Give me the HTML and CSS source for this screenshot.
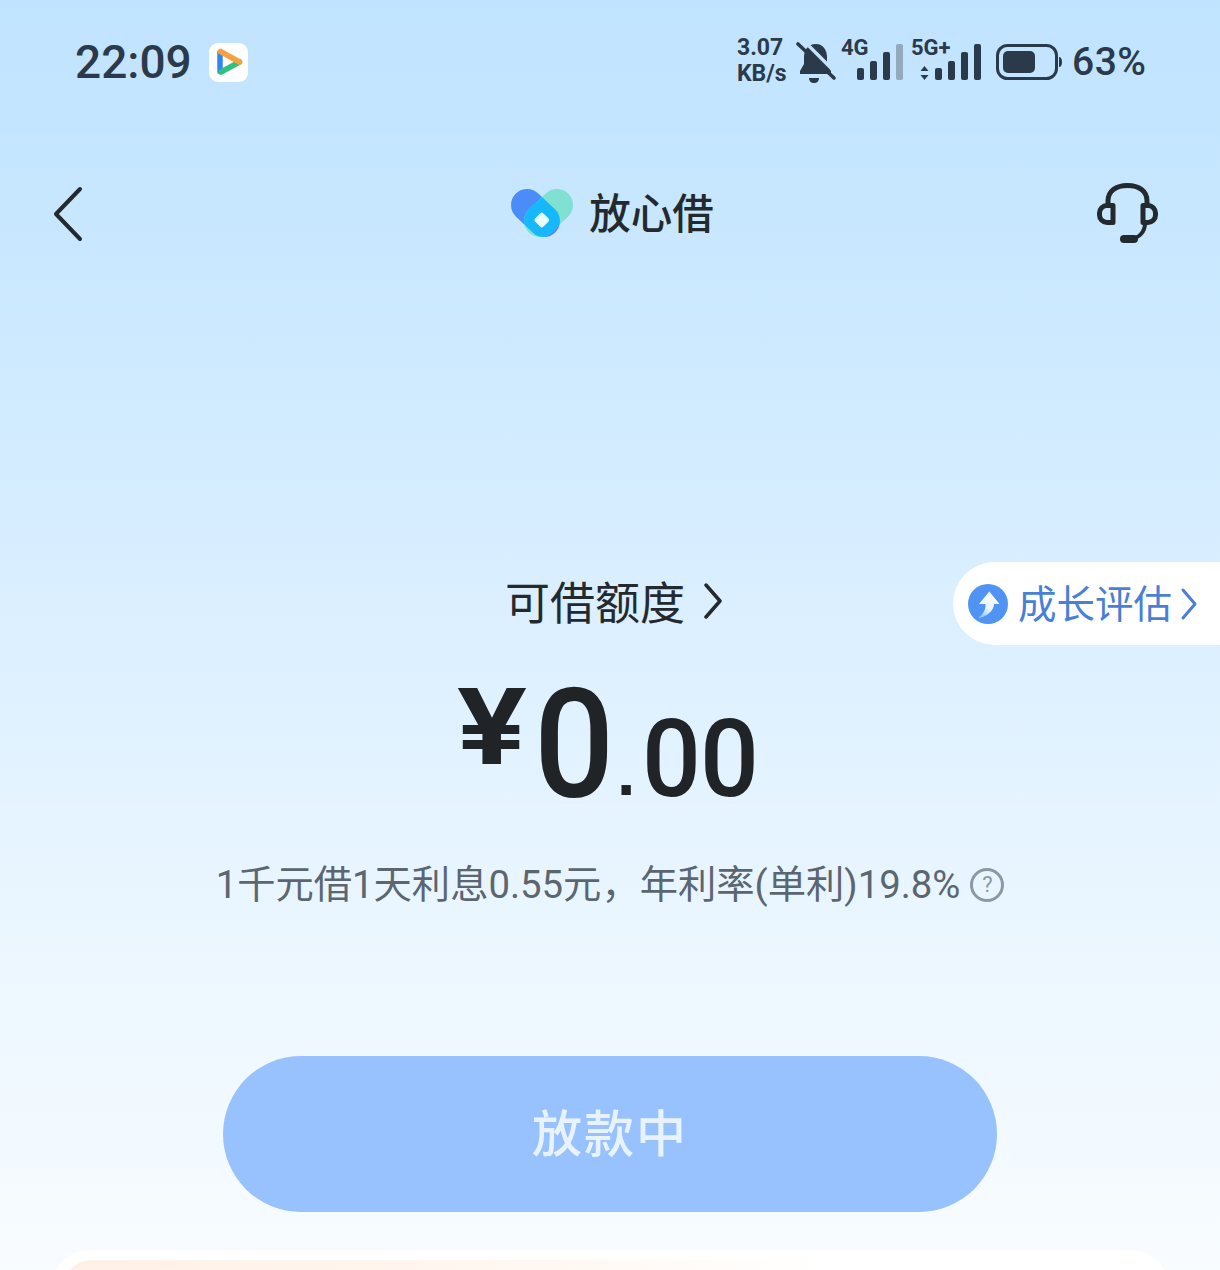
FILE: index.html
```html
<!DOCTYPE html>
<html lang="zh-CN">
<head>
<meta charset="utf-8">
<title>放心借</title>
<link rel="stylesheet" href="styles.css">
</head>
<body>
<div class="page">
  <header class="status">
    <div class="status-left">
      <span class="time">22:09</span>
      <svg class="app-icon" viewBox="0 0 39 39" width="39" height="39">
        <rect width="39" height="39" rx="9" fill="#fff"/>
        <path d="M11 9.5 L11 28.5" stroke="#2f86f0" stroke-width="5.5" stroke-linecap="round" fill="none"/>
        <path d="M12 29 L30.5 19" stroke="#2ec27e" stroke-width="5.5" stroke-linecap="round" fill="none"/>
        <path d="M11.5 8.5 L30.5 19" stroke="#f5a142" stroke-width="5.5" stroke-linecap="round" fill="none"/>
      </svg>
    </div>
    <div class="status-right">
      <div class="speed"><span>3.07</span><span>KB/s</span></div>
      <svg class="bell" viewBox="0 0 40 43" width="40" height="43">
        <path d="M20 2c-8 0-12 6-12 13v7l-4 7v3h31v-3l-4-7v-7c0-7-4-13-11-13z" fill="#2b3a4a"/>
        <path d="M13 36h10c0 3-2 5-5 5s-5-2-5-5z" fill="#2b3a4a"/>
        <path d="M8 -1 L42 33" stroke="#c2e4ff" stroke-width="3.4"/>
        <path d="M2 2 L38 36" stroke="#2b3a4a" stroke-width="3.6" stroke-linecap="round"/>
      </svg>
      <div class="signal">
        <span class="net">4G</span>
        <div class="bars">
          <i class="bar h1"></i><i class="bar h2"></i><i class="bar h3"></i><i class="bar h4 dim"></i>
        </div>
      </div>
      <div class="signal sig5">
        <span class="net">5G+</span>
        <svg class="updown" viewBox="0 0 9 14" width="9" height="14">
          <path d="M4.5 0 L8.5 5 H.5 Z M4.5 14 L8.5 9 H.5 Z" fill="#2b3a4a"/>
        </svg>
        <div class="bars">
          <i class="bar h1"></i><i class="bar h2"></i><i class="bar h3"></i><i class="bar h4"></i>
        </div>
      </div>
      <svg class="battery" viewBox="0 0 66 36" width="66" height="36">
        <rect x="1.5" y="1.5" width="59" height="33" rx="10" fill="none" stroke="#2b3a4a" stroke-width="3"/>
        <rect x="7" y="7" width="32" height="22" rx="5" fill="#2b3a4a"/>
        <path d="M63 13c2 0 3 2 3 5s-1 5-3 5z" fill="#2b3a4a"/>
      </svg>
      <span class="percent">63%</span>
    </div>
  </header>

  <nav class="nav">
    <svg class="back" viewBox="0 0 32 56" width="32" height="56">
      <path d="M28 3 L4 28 L28 53" fill="none" stroke="#24292e" stroke-width="4" stroke-linecap="round" stroke-linejoin="round"/>
    </svg>
    <div class="brand">
      <svg class="logo" viewBox="0 0 62 50" width="62" height="50">
        <defs>
          <clipPath id="overlap">
            <rect x="-3.150" y="10" width="55.300" height="32" rx="16" transform="rotate(43.300 24.500 26)"/>
          </clipPath>
        </defs>
        <rect x="-3.150" y="10" width="55.300" height="32" rx="16" transform="rotate(43.300 24.500 26)" fill="#4a8cf8"/>
        <rect x="9.850" y="10" width="55.300" height="32" rx="16" transform="rotate(-43.300 37.500 26)" fill="#80e0d2"/>
        <g clip-path="url(#overlap)">
          <rect x="9.850" y="10" width="55.300" height="32" rx="16" transform="rotate(-43.300 37.500 26)" fill="#14b8fb"/>
        </g>
        <rect x="25" y="27.200" width="11.600" height="11.600" rx="2" transform="rotate(45 30.800 33)" fill="#e9fcff"/>
      </svg>
      <span class="brand-name">放心借</span>
    </div>
    <svg class="headset" viewBox="0 0 66 66" width="66" height="66">
      <path d="M13 24v-4c0-10 8-15.500 19.500-15.500S52 10 52 20v4" fill="none" stroke="#24292e" stroke-width="5"/>
      <path d="M18 24.500h-6a7.500 7.500 0 0 0-7.500 7.500v2a7.500 7.500 0 0 0 7.500 7.500h6z" fill="none" stroke="#24292e" stroke-width="5" stroke-linejoin="round"/>
      <path d="M48 24.500h5a7.500 7.500 0 0 1 7.500 7.500v2a7.500 7.500 0 0 1-7.500 7.500h-5z" fill="none" stroke="#24292e" stroke-width="5" stroke-linejoin="round"/>
      <path d="M50 42c0 9-6 15-14 16" fill="none" stroke="#24292e" stroke-width="4"/>
      <rect x="25" y="54" width="18" height="8" rx="4" fill="#24292e"/>
    </svg>
  </nav>

  <main class="main">
    <div class="limit">
      <span>可借额度</span>
      <svg class="limit-arrow" viewBox="0 0 20 36" width="20" height="36">
        <path d="M3 2 L17 18 L3 34" fill="none" stroke="#24292e" stroke-width="3.500" stroke-linecap="round" stroke-linejoin="round"/>
      </svg>
    </div>
    <div class="amount">
      <span class="yen">¥</span><span class="int">0</span><span class="dot">.</span><span class="dec">00</span>
    </div>
    <div class="rate">
      <span>1千元借1天利息0.55元，年利率(单利)19.8%</span>
      <span class="help">?</span>
    </div>
    <button class="cta"><span class="cta-label">放款中</span></button>
  </main>

  <aside class="growth">
    <svg class="growth-icon" viewBox="0 0 40 40" width="40" height="40">
      <defs>
        <linearGradient id="arrowfill" x1="0.6" y1="0" x2="0.2" y2="1">
          <stop offset="0" stop-color="#ffffff"/>
          <stop offset="0.6" stop-color="#e8f4ff"/>
          <stop offset="1" stop-color="#8fc0fa"/>
        </linearGradient>
      </defs>
      <circle cx="20" cy="20" r="20" fill="#4f94f5"/>
      <path d="M21.300 7.500 L31.500 20 H26 C26 27 19 32 10 34.500 C15 30 18 26 17.500 20 H11 Z" fill="url(#arrowfill)"/>
    </svg>
    <span class="growth-text">成长评估</span>
    <svg class="growth-arrow" viewBox="0 0 18 34" width="18" height="34">
      <path d="M3 3 L15 17 L3 31" fill="none" stroke="#4a7fd6" stroke-width="3" stroke-linecap="round" stroke-linejoin="round"/>
    </svg>
  </aside>

  <section class="card"><div class="card-inner"></div></section>
</div>
</body>
</html>
```
FILE: styles.css
```css
* { box-sizing: border-box; }
html, body { margin: 0; padding: 0; }
body { font-family: Roboto, "Noto Sans CJK SC", sans-serif; }
.page {
  position: relative;
  width: 1220px;
  height: 1270px;
  overflow: hidden;
  background: linear-gradient(180deg, #c0e3ff 0%, #c9e8ff 20%, #dbefff 48%, #eaf6ff 72%, #f8fcff 100%);
  display: flex;
  flex-direction: column;
}
.status {
  height: 124px;
  padding: 0 74px 0 75px;
  display: flex;
  justify-content: space-between;
  align-items: center;
  color: #2b3a4a;
}
.status-left { display: flex; align-items: center; gap: 17px; }
.time { font-size: 46px; font-weight: 500; }
.app-icon { display: block; }
.status-right { display: flex; align-items: center; }
.speed {
  display: flex; flex-direction: column;
  font-size: 23px; font-weight: 700; line-height: 26px; width: 60px;
  padding-left: 1px;
  margin-top: -2px;
}
.bell { display: block; margin-right: 5px; margin-top: 2px; }
.signal { position: relative; width: 62px; height: 36px; }
.net { position: absolute; left: 0; top: -8px; font-size: 22px; font-weight: 700; line-height: 24px; }
.bars { position: absolute; right: 0; bottom: 0; display: flex; align-items: flex-end; gap: 6px; }
.bar { display: block; width: 7px; border-radius: 2px; background: #2b3a4a; }
.h1 { height: 12px; }
.h2 { height: 19px; }
.h3 { height: 28px; }
.h4 { height: 36px; }
.dim { background: #93a9bd; }
.sig5 { width: 70px; margin-left: 8px; }
.updown { position: absolute; left: 9px; bottom: 0; }
.battery { display: block; margin-left: 15px; }
.percent { font-size: 39px; font-weight: 500; letter-spacing: .5px; margin-left: 10px; width: 74px; white-space: nowrap; }

.nav {
  height: 180px;
  padding: 0 59px 0 52px;
  display: flex;
  align-items: center;
  justify-content: space-between;
}
.back { display: block; }
.brand { display: flex; align-items: center; gap: 16px; margin-left: 46px; margin-top: -4px; }
.logo { display: block; }
.brand-name { font-family: "Noto Sans CJK SC", sans-serif; font-size: 41.500px; font-weight: 500; line-height: 48px; margin-bottom: 2px; color: #24292e; }
.headset { display: block; }

.main { display: flex; flex-direction: column; align-items: center; padding-top: 264px; }
.limit {
  display: flex; align-items: center; gap: 18px;
  font-family: "Noto Sans CJK SC", sans-serif;
  font-size: 45px; line-height: 66px; color: #24292e;
  margin-left: 8px;
}
.amount {
  display: flex; align-items: flex-start;
  height: 130px; margin-top: 46px;
  width: 340px;
  color: #212427;
  font-family: Roboto, sans-serif;
  font-weight: 500;
  margin-left: 32px;
}
.yen { display: block; flex: none; font-family: Inter, sans-serif; font-weight: 700; font-size: 105px; line-height: 92px; width: 78px; transform: scaleX(1.2); transform-origin: left top; }
.int { display: block; flex: none; font-size: 152px; line-height: 130px; width: 83px; transform: scaleX(.93); transform-origin: left top; }
.dot { display: block; flex: none; font-family: "Liberation Sans", sans-serif; font-weight: 700; font-size: 66px; line-height: 130px; width: 25px; margin-top: 27px; }
.dec { display: block; flex: none; font-size: 108px; line-height: 130px; margin-top: 14px; transform: scaleX(.96); transform-origin: left top; letter-spacing: -1px; white-space: nowrap; }
.rate {
  display: flex; align-items: center; gap: 10px;
  font-family: Roboto, "Noto Sans CJK SC", sans-serif;
  font-weight: 400;
  font-size: 38.300px; line-height: 56px; color: #5b6671;
  margin-top: 47px;
}
.help {
  width: 34px; height: 34px; border-radius: 50%;
  border: 3px solid #8c98a4; color: #8c98a4;
  display: flex; align-items: center; justify-content: center;
  font-size: 22px; font-weight: 400;
}
.cta {
  display: block;
  width: 774px; height: 156px;
  margin-top: 143px;
  border: 0; border-radius: 78px;
  background: #97c2fd;
  color: #e9f3ff;
  font-family: "Noto Sans CJK SC", sans-serif;
  font-size: 50px; font-weight: 500; letter-spacing: 2px;
  padding: 0 0 8px;
}
.growth {
  position: absolute; right: 0; top: 562px;
  width: 267px; height: 83px;
  background: #fff;
  border-radius: 42px 0 0 42px;
  display: flex; align-items: center;
  padding-left: 15px;
  color: #4a7fd6;
}
.growth-icon { display: block; }
.growth-text { font-family: "Noto Sans CJK SC", sans-serif; font-size: 38.500px; line-height: 50px; margin-left: 10px; margin-top: -6px; }
.growth-arrow { display: block; margin-left: 8px; }
.card {
  position: absolute; left: 50px; top: 1250px;
  width: 1120px; height: 200px;
  background: #fff;
  border-radius: 40px 40px 0 0;
  padding: 10px 12px 0;
}
.card-inner {
  height: 100%;
  border-radius: 30px 30px 0 0;
  background: linear-gradient(90deg, #fff0e6 0%, #fff8f2 45%, #fff 70%);
}
```
